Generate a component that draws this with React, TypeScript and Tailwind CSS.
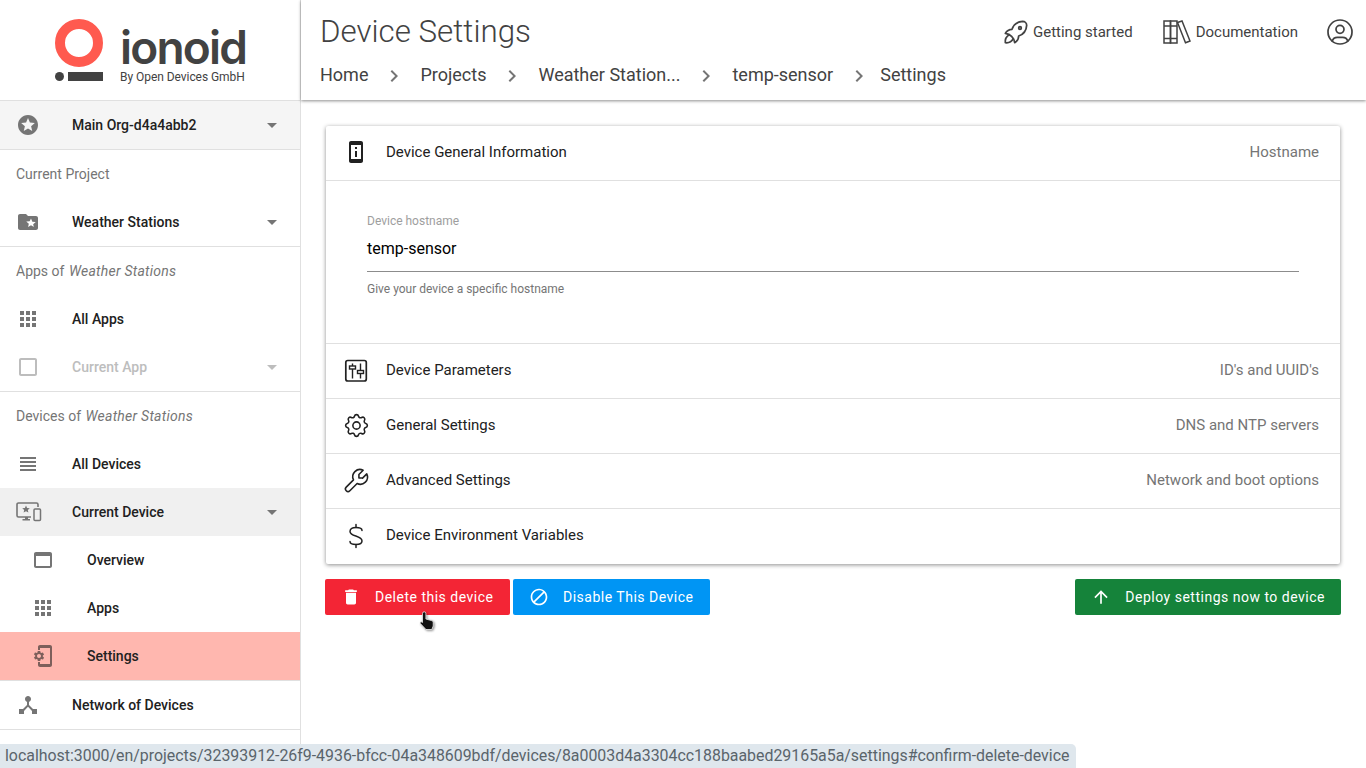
import type { ReactNode } from "react";
import { TbRocket, TbSettings, TbTool, TbUserCircle } from "react-icons/tb";

const paths = {
  star: "M11.99 2C6.47 2 2 6.48 2 12s4.47 10 9.99 10C17.52 22 22 17.52 22 12S17.52 2 11.99 2zm4.24 16L12 15.45 7.77 18l1.12-4.81-3.73-3.23 4.92-.42L12 5l1.92 4.53 4.92.42-3.73 3.23L16.23 18z",
  folder: "M20 6h-8l-2-2H4c-1.1 0-1.99.9-1.99 2L2 18c0 1.1.9 2 2 2h16c1.1 0 2-.9 2-2V8c0-1.1-.9-2-2-2zm-2.06 11L15 15.28 12.06 17l.78-3.33-2.59-2.24 3.41-.29L15 8.5l1.34 3.14 3.41.29-2.59 2.24.78 3.33z",
  apps: "M4 8h4V4H4v4zm6 12h4v-4h-4v4zm-6 0h4v-4H4v4zm0-6h4v-4H4v4zm6 0h4v-4h-4v4zm6-10v4h4V4h-4zm-6 4h4V4h-4v4zm6 6h4v-4h-4v4zm0 6h4v-4h-4v4z",
  blank: "M19 5v14H5V5h14m0-2H5c-1.1 0-2 .9-2 2v14c0 1.1.9 2 2 2h14c1.1 0 2-.9 2-2V5c0-1.1-.9-2-2-2z",
  headline: "M4 15h16v-2H4v2zm0 4h16v-2H4v2zm0-8h16V9H4v2zm0-6v2h16V5H4z",
  web: "M19 4H5c-1.11 0-2 .9-2 2v12c0 1.1.89 2 2 2h14c1.1 0 2-.9 2-2V6c0-1.1-.89-2-2-2zm0 14H5V8h14v10z",
  setup: "M11.8 12.5v-1l1.1-.8c.1-.1.1-.2.1-.3l-1-1.7c-.1-.1-.2-.2-.3-.1l-1.3.4c-.3-.2-.6-.4-.9-.5l-.2-1.3c0-.1-.1-.2-.3-.2H7c-.1 0-.2.1-.3.2l-.2 1.3c-.3.1-.6.3-.9.5l-1.3-.5c-.1 0-.2 0-.3.1l-1 1.7c-.1.1 0 .2.1.3l1.1.8v1l-1.1.8c-.1.2-.1.3-.1.4l1 1.7c.1.1.2.2.3.1l1.4-.4c.3.2.6.4.9.5l.2 1.3c-.1.1.1.2.2.2h2c.1 0 .2-.1.3-.2l.2-1.3c.3-.1.6-.3.9-.5l1.3.5c.1 0 .2 0 .3-.1l1-1.7c.1-.1 0-.2-.1-.3l-1.1-.9zM8 14c-1.1 0-2-.9-2-2s.9-2 2-2 2 .9 2 2-.9 2-2 2zM19 1H9c-1.1 0-2 .9-2 2v3h2V4h10v16H9v-2H7v3c0 1.1.9 2 2 2h10c1.1 0 2-.9 2-2V3c0-1.1-.9-2-2-2z",
  hub: "M17 16l-4-4V8.82C14.16 8.4 15 7.3 15 6c0-1.66-1.34-3-3-3S9 4.34 9 6c0 1.3.84 2.4 2 2.82V12l-4 4H3v5h5v-3.05l4-4.2 4 4.2V21h5v-5h-4z",
  info: "M13 7h-2v2h2V7zm0 4h-2v6h2v-6zm4-9.99L7 1c-1.1 0-2 .9-2 2v18c0 1.1.9 2 2 2h10c1.1 0 2-.9 2-2V3c0-1.1-.9-1.99-2-1.99zM17 19H7V5h10v14z",
  trash: "M6 19c0 1.1.9 2 2 2h8c1.1 0 2-.9 2-2V7H6v12zM19 4h-3.5l-1-1h-5l-1 1H5v2h14V4z",
  block: "M12 2C6.48 2 2 6.48 2 12s4.48 10 10 10 10-4.48 10-10S17.52 2 12 2zM4 12c0-4.42 3.58-8 8-8 1.85 0 3.55.63 4.9 1.69L5.69 16.9C4.63 15.55 4 13.85 4 12zm8 8c-1.85 0-3.55-.63-4.9-1.69L18.31 7.1C19.37 8.45 20 10.15 20 12c0 4.42-3.58 8-8 8z",
  up: "M4 12l1.41 1.41L11 7.83V20h2V7.83l5.58 5.59L20 12l-8-8-8 8z",
  chevron: "M10 6L8.59 7.41 13.17 12l-4.58 4.59L10 18l6-6z",
};

function MaterialIcon({ d, className }: { d: string; className?: string }) {
  return (
    <svg viewBox="0 0 24 24" width="24" height="24" fill="currentColor" className={className}>
      <path d={d} />
    </svg>
  );
}

function DeviceIcon() {
  return (
    <svg viewBox="0 0 26 24" width="26" height="24" fill="none" className="text-[#757575]">
      <path d="M15 17H2.5A1.5 1.5 0 0 1 1 15.500V4.500A1.500 1.500 0 0 1 2.500 3H20.500A1.500 1.500 0 0 1 22 4.500V7" stroke="currentColor" strokeWidth="1.600" />
      <path d="M10 5.500l1.100 2.500 2.700.2-2 1.800.6 2.600-2.400-1.400-2.400 1.400.6-2.600-2-1.800 2.700-.2z" fill="currentColor" />
      <path d="M6.500 20.500H14v-1.500h-2v-2H9v2H6.500z" fill="currentColor" />
      <rect x="18" y="9" width="6.500" height="11.500" rx="1" stroke="currentColor" strokeWidth="1.500" />
    </svg>
  );
}

function ParamsIcon() {
  return (
    <svg viewBox="0 0 24 24" width="24" height="24" fill="none" stroke="#212121" strokeWidth="1.400" className="shrink-0">
      <rect x="1.800" y="2.500" width="20.500" height="20.500" rx="2" strokeWidth="1.700" />
      <path d="M8.500 5.500v15M16.500 5.500v15" />
      <rect x="5.500" y="8" width="6" height="3" fill="white" />
      <rect x="13.500" y="12.500" width="6" height="3" fill="white" />
    </svg>
  );
}

function BooksIcon() {
  return (
    <svg viewBox="0 0 28 26" width="28" height="26" fill="none" stroke="#424242" strokeWidth="1.500" className="shrink-0">
      <rect x="1" y="2" width="6.500" height="22" />
      <rect x="7.500" y="2" width="6.500" height="22" />
      <path d="M1 7h13M1 19.500h13" />
      <path d="M14.500 3.500l4.500-1.500 8 20-4.500 1.800z" />
    </svg>
  );
}

function DollarIcon() {
  return (
    <svg viewBox="0 0 16 26" width="16" height="26" fill="none" stroke="#212121" strokeWidth="1.500" strokeLinecap="round">
      <path d="M14 7.500C14 5.500 12 4.500 8 4.500S2 6 2 8.500c0 5.500 12 3.500 12 9.500 0 2.500-2.500 3.500-6 3.500S2 20.500 2 18.500" />
      <path d="M8 1.500v3M8 21.500v3" />
    </svg>
  );
}

function HandCursor() {
  return (
    <svg viewBox="0 0 20 22" width="20" height="22" className="absolute left-[417px] top-[610px] drop-shadow-[1px_1px_1px_rgba(0,0,0,0.45)]">
      <path
        d="M5.500 3.500a1.700 1.700 0 0 1 3.400 0V9l5.600 1.600c1.100.3 1.700 1 1.700 2.100v3.300l-1.400 3.500H9L3.400 13.600c-.8-1 .3-2.300 1.500-1.500l.6.400z"
        fill="#111"
        stroke="white"
        strokeWidth="0.700"
      />
    </svg>
  );
}

function Caret({ light }: { light?: boolean }) {
  return (
    <span className={`h-0 w-0 border-x-[5px] border-t-[5px] border-x-transparent ${light ? "border-t-[#bdbdbd]" : "border-t-[#757575]"}`} />
  );
}

function NavRow({
  icon,
  label,
  caret,
  nested,
  active,
  disabled,
  tint,
}: {
  icon: ReactNode;
  label: string;
  caret?: boolean;
  nested?: boolean;
  active?: boolean;
  disabled?: boolean;
  tint?: string;
}) {
  return (
    <div
      className={`flex h-12 items-center pr-[23px] text-sm font-medium ${nested ? "pl-[31px]" : "pl-4"} ${tint ?? ""} ${active ? "bg-[#ffb7af]" : ""} ${disabled ? "text-[#bdbdbd]" : "text-[#212121]"}`}
    >
      <span className={`flex w-[56px] shrink-0 items-center ${disabled ? "text-[#bdbdbd]" : active ? "text-[#7d5f5b]" : "text-[#757575]"}`}>{icon}</span>
      <span className="flex-1">{label}</span>
      {caret && <Caret light={disabled} />}
    </div>
  );
}

function SubHeader({ children }: { children: ReactNode }) {
  return <div className="flex h-12 items-center pl-4 text-sm text-[#757575]">{children}</div>;
}

function CardRow({ icon, title, hint, border = true }: { icon: ReactNode; title: string; hint?: string; border?: boolean }) {
  return (
    <div className={`flex h-[55px] items-center pb-[2px] pl-[18px] pr-[21px] text-[15px] ${border ? "border-b border-[#e0e0e0]" : ""}`}>
      <span className="flex w-[42px] shrink-0 items-center justify-center pr-[18px] text-[#212121]">{icon}</span>
      <span className="flex-1 text-[#212121]">{title}</span>
      {hint && <span className="text-[#757575]">{hint}</span>}
    </div>
  );
}

function ActionButton({ icon, label, color, width }: { icon: string; label: string; color: string; width?: string }) {
  return (
    <button className={`flex h-9 items-center gap-[14px] rounded-[2px] pl-4 pr-4 text-sm tracking-[0.5px] text-white ${color} ${width ?? ""}`}>
      <MaterialIcon d={icon} className="h-5 w-5" />
      {label}
    </button>
  );
}

const crumbs = ["Home", "Projects", "Weather Station...", "temp-sensor", "Settings"];

export default function App() {
  return (
    <div className="relative flex h-screen overflow-hidden bg-white font-['Roboto',sans-serif]">
      <aside className="w-[301px] shrink-0 border-r border-[#e0e0e0]">
        <div className="flex h-[101px] items-start border-b border-[#e0e0e0] pl-[55px] pt-[19px]">
          <svg viewBox="0 0 48 63" width="48" height="63" className="shrink-0">
            <circle cx="24" cy="24" r="19" fill="none" stroke="#ff5a4f" strokeWidth="10" />
            <circle cx="4.500" cy="57.500" r="4.500" fill="#424242" />
            <rect x="13" y="53" width="35" height="9" fill="#424242" />
          </svg>
          <div className="ml-[17px] flex flex-col text-[#424242]">
            <span className="mt-[5px] text-[46px] leading-[46px] font-semibold tracking-[-1.8px] font-['Inter',sans-serif]">ionoid</span>
            <span className="text-xs leading-[14px] tracking-[-0.05px]">By Open Devices GmbH</span>
          </div>
        </div>
        <div className="border-b border-[#e0e0e0]">
          <NavRow icon={<MaterialIcon d={paths.star} />} label="Main Org-d4a4abb2" caret tint="bg-[#f5f5f5]" />
        </div>
        <div className="border-b border-[#e0e0e0]">
          <SubHeader>Current Project</SubHeader>
          <NavRow icon={<MaterialIcon d={paths.folder} />} label="Weather Stations" caret />
        </div>
        <div className="border-b border-[#e0e0e0]">
          <SubHeader>
            Apps of&nbsp;<i className="ml-px tracking-[0.25px]">Weather Stations</i>
          </SubHeader>
          <NavRow icon={<MaterialIcon d={paths.apps} />} label="All Apps" />
          <NavRow icon={<MaterialIcon d={paths.blank} />} label="Current App" caret disabled />
        </div>
        <div className="border-b border-[#e0e0e0]">
          <SubHeader>
            Devices of&nbsp;<i className="ml-px tracking-[0.25px]">Weather Stations</i>
          </SubHeader>
          <NavRow icon={<MaterialIcon d={paths.headline} />} label="All Devices" />
          <NavRow icon={<DeviceIcon />} label="Current Device" caret tint="bg-[#f0f0f0]" />
          <NavRow nested icon={<MaterialIcon d={paths.web} />} label="Overview" />
          <NavRow nested icon={<MaterialIcon d={paths.apps} />} label="Apps" />
          <NavRow nested active icon={<MaterialIcon d={paths.setup} />} label="Settings" />
        </div>
        <div className="border-b border-[#e0e0e0]">
          <NavRow icon={<MaterialIcon d={paths.hub} />} label="Network of Devices" />
        </div>
      </aside>

      <main className="flex min-w-0 flex-1 flex-col">
        <header className="flex h-[100px] shrink-0 justify-between pl-[19px] pr-[10px] shadow-[0_1px_3px_rgba(0,0,0,0.45)]">
          <div>
            <h1 className="mt-[13px] text-[31.3px] leading-[38px] font-light text-[#424242]">Device Settings</h1>
            <nav className="mt-[10px] flex items-center text-lg leading-[24px] text-[#424242]">
              {crumbs.map((crumb, i) => (
                <span key={crumb} className="flex items-center">
                  {i > 0 && <MaterialIcon d={paths.chevron} className={`mt-[3px] text-[#757575] ${i === 4 ? "ml-[14px] mr-[9px]" : "mx-[14px]"}`} />}
                  {crumb}
                </span>
              ))}
            </nav>
          </div>
          <div className="flex h-[64px] items-center text-[15px] text-[#424242]">
            <a className="flex items-center gap-[1px]">
              <TbRocket size={32} strokeWidth={1.300} />
              Getting started
            </a>
            <a className="ml-[30px] flex items-center gap-[5px]">
              <BooksIcon />
              Documentation
            </a>
            <TbUserCircle size={32} strokeWidth={1.300} className="ml-[26px]" />
          </div>
        </header>

        <div className="flex-1 pl-[25px] pr-[26px] pt-[26px]">
          <section className="rounded-[2px] shadow-[0_1px_4px_rgba(0,0,0,0.45)]">
            <CardRow icon={<MaterialIcon d={paths.info} />} title="Device General Information" hint="Hostname" />
            <div className="h-[163px] border-b border-[#e0e0e0] px-[41px] pt-[33px]">
              <div className="text-xs leading-[14px] text-[#9e9e9e]">Device hostname</div>
              <div className="mt-[6px] h-[38px] border-b border-[#8c8c8c] pt-[3px] text-base leading-[24px] text-black">temp-sensor</div>
              <div className="mt-[10px] text-xs leading-[14px] text-[#757575]">Give your device a specific hostname</div>
            </div>
            <CardRow icon={<ParamsIcon />} title="Device Parameters" hint="ID's and UUID's" />
            <CardRow icon={<TbSettings size={29} strokeWidth={1.300} className="shrink-0" />} title="General Settings" hint="DNS and NTP servers" />
            <CardRow icon={<TbTool size={29} strokeWidth={1.300} className="shrink-0 -scale-x-100" />} title="Advanced Settings" hint="Network and boot options" />
            <CardRow icon={<DollarIcon />} title="Device Environment Variables" border={false} />
          </section>

          <div className="-mx-px mt-[15px] flex gap-[3px]">
            <ActionButton icon={paths.trash} label="Delete this device" color="bg-[#f32535]" width="w-[185px]" />
            <ActionButton icon={paths.block} label="Disable This Device" color="bg-[#0095f4]" width="w-[197px]" />
            <div className="flex-1" />
            <ActionButton icon={paths.up} label="Deploy settings now to device" color="bg-[#15833a]" />
          </div>
        </div>
      </main>

      <HandCursor />

      <div className="absolute bottom-0 left-0 flex h-6 w-[1076px] items-center whitespace-nowrap rounded-tr-[5px] bg-[#dfe7ed] pl-[5px] text-[15.9px] text-[#5a646b]">
        localhost:3000/en/projects/32393912-26f9-4936-bfcc-04a348609bdf/devices/8a0003d4a3304cc188baabed29165a5a/settings#confirm-delete-device
      </div>
    </div>
  );
}
